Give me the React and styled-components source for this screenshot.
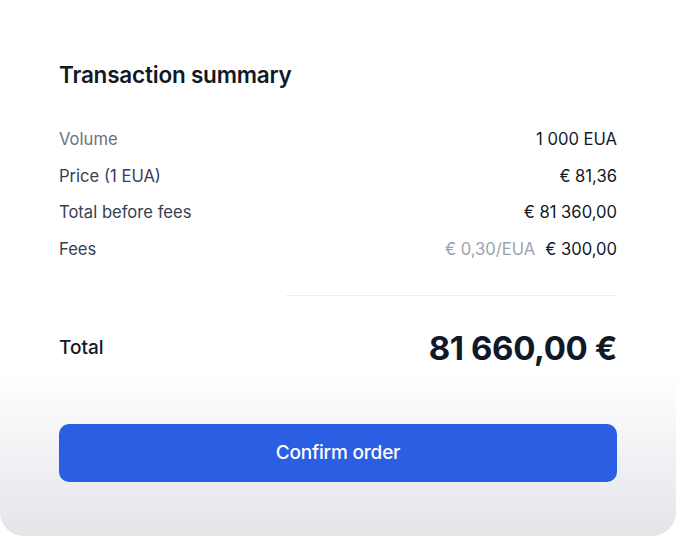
import React from "react";
import styled, { createGlobalStyle } from "styled-components";

const Global = createGlobalStyle`
  html, body { margin: 0; padding: 0; background: #ffffff; }
  body { font-family: Inter, "Noto Sans", sans-serif; -webkit-font-smoothing: antialiased; }
`;

const Card = styled.div`
  width: 676px;
  height: 536px;
  box-sizing: border-box;
  border-radius: 0 0 24px 24px;
  background: linear-gradient(to bottom, #ffffff 0px, #ffffff 372px, #f3f4f6 440px, #e3e5e9 536px);
  padding: 59px 59px 0 59px;
  display: flex;
  flex-direction: column;
`;

const Title = styled.h2`
  margin: 0;
  font-size: 22.5px;
  font-weight: 600;
  color: #111827;
  line-height: 32px;
  letter-spacing: -0.2px;
`;

const Rows = styled.div`
  margin-top: 37px;
  display: flex;
  flex-direction: column;
  gap: 14.6px;
`;

const Row = styled.div`
  display: flex;
  justify-content: space-between;
  align-items: center;
  height: 22px;
  font-size: 16.6px;
`;

const Label = styled.span`
  color: ${(p) => (p.$muted ? "#6b7280" : "#374151")};
`;

const Value = styled.span`
  color: #111827;
  display: flex;
  gap: 10px;
`;

const Sub = styled.span`
  color: #9ca3af;
`;

const Divider = styled.hr`
  margin: 35px 0 0 227px;
  border: none;
  border-top: 1px solid #eceef1;
  width: 331px;
`;

const TotalRow = styled.div`
  margin-top: 32px;
  display: flex;
  justify-content: space-between;
  align-items: center;
  height: 40px;
`;

const TotalLabel = styled.span`
  font-size: 19px;
  font-weight: 500;
  color: #111827;
`;

const TotalValue = styled.span`
  font-size: 33px;
  font-weight: 700;
  color: #111827;
  letter-spacing: -0.4px;
`;

const Button = styled.button`
  margin-top: 56px;
  height: 58px;
  width: 100%;
  border: none;
  border-radius: 10px;
  background: #2a5ee3;
  color: #ffffff;
  font-family: inherit;
  font-size: 19px;
  font-weight: 500;
  letter-spacing: -0.2px;
  cursor: pointer;
`;

const rows = [
  { label: "Volume", value: "1 000 EUA", muted: true },
  { label: "Price (1 EUA)", value: "€ 81,36" },
  { label: "Total before fees", value: "€ 81 360,00" },
  { label: "Fees", value: "€ 300,00", sub: "€ 0,30/EUA" },
];

export default function App() {
  return (
    <>
      <Global />
      <Card>
        <Title>Transaction summary</Title>
        <Rows>
          {rows.map((r) => (
            <Row key={r.label}>
              <Label $muted={r.muted}>{r.label}</Label>
              <Value>
                {r.sub && <Sub>{r.sub}</Sub>}
                <span>{r.value}</span>
              </Value>
            </Row>
          ))}
        </Rows>
        <Divider />
        <TotalRow>
          <TotalLabel>Total</TotalLabel>
          <TotalValue>81 660,00 €</TotalValue>
        </TotalRow>
        <Button>Confirm order</Button>
      </Card>
    </>
  );
}
